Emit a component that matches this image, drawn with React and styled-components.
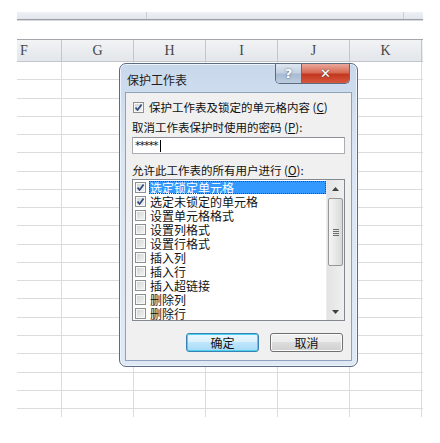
import styled, { createGlobalStyle } from "styled-components";

const cjk = `"Noto Sans CJK SC", "Noto Sans", sans-serif`;

const Global = createGlobalStyle`
  html, body { margin: 0; padding: 0; background: #ffffff; }
  body { width: 440px; height: 443px; overflow: hidden; font-family: ${cjk}; }
`;

const Page = styled.div`
  position: relative;
  width: 440px;
  height: 443px;
  padding: 12px 17px 0;
  box-sizing: border-box;
`;

const Band = styled.div`
  height: 7px;
  display: grid;
  grid-template-columns: 130px 1fr 19px;
  background: linear-gradient(#eef1f5, #e2e6ec);
  border-bottom: 1px solid #9b9fa5;
  box-shadow: 0 1px 0 #d6d9dd;
`;

const BandCell = styled.div`
  border-right: 1px solid #c9ced6;
  &:last-child { border-right: none; }
`;

const FormulaArea = styled.div`
  height: 18px;
  margin-top: 1px;
`;

const Sheet = styled.div`
  height: 377px;
  overflow: hidden;
  border-top: 1px solid #a3a6ab;
`;

const Row = styled.div`
  display: grid;
  grid-template-columns: 45px repeat(5, 72px) 20px;
  height: ${(p) => (p.$head ? "22px" : "18.28px")};
  box-sizing: border-box;
  border-bottom: 1px solid ${(p) => (p.$head ? "#c2c6cc" : "#dadcdf")};
  background: ${(p) => (p.$head ? "linear-gradient(#f1f3f5, #e3e6ea)" : "#ffffff")};
`;

const Cell = styled.div`
  border-right: 1px solid ${(p) => (p.$head ? "#c3c7cd" : "#dadcdf")};
  font-family: "Liberation Serif", "DejaVu Serif", serif;
  font-size: 14px;
  line-height: 22px;
  color: #454545;
  text-align: ${(p) => (p.$cut ? "left" : "center")};
  padding-left: ${(p) => (p.$cut ? "3px" : "0")};
`;

const Dialog = styled.div`
  position: absolute;
  left: 119px;
  top: 63px;
  width: 239px;
  height: 304px;
  box-sizing: border-box;
  border: 1px solid #5b6c82;
  border-radius: 7px;
  background: linear-gradient(#c8d8eb, #d9e5f3 30%, #dfe9f5);
  box-shadow: inset 0 0 0 1px #eef4fb;
  display: flex;
  flex-direction: column;
`;

const TitleBar = styled.div`
  height: 28px;
  display: flex;
  align-items: flex-start;
  justify-content: space-between;
  padding-left: 7px;
  padding-right: 7px;
`;

const Title = styled.div`
  font-size: 12px;
  line-height: 12px;
  margin-top: 10px;
  color: #1e1e1e;
`;

const Controls = styled.div`
  display: flex;
  height: 19px;
  border: 1px solid #5d6b80;
  border-top: none;
  border-radius: 0 0 5px 5px;
  overflow: hidden;
`;

const CtrlBtn = styled.div`
  width: ${(p) => (p.$close ? "47px" : "25px")};
  display: flex;
  align-items: center;
  justify-content: center;
  background: ${(p) =>
    p.$close
      ? "linear-gradient(#e9a99c, #d96a55 45%, #c2371f 55%, #d7593d)"
      : "linear-gradient(#dfe7f1, #c3d1e2 45%, #a9bbd2 55%, #bccde0)"};
  border-right: ${(p) => (p.$close ? "none" : "1px solid #5d6b80")};
  color: #ffffff;
  font-family: "DejaVu Sans", sans-serif;
  font-weight: bold;
  font-size: 13px;
  line-height: 13px;
  text-shadow: 0 0 2px #404a58;
`;

const Panel = styled.div`
  flex: 1;
  margin: 0 5px 5px;
  background: #f0f0f0;
  border: 1px solid #8fa2bb;
  padding: 0 6px 0 6px;
  display: flex;
  flex-direction: column;
  font-size: 11.5px;
  line-height: 14px;
  color: #111;
`;

const CheckRow = styled.div`
  display: flex;
  align-items: center;
  gap: 5px;
  height: 14px;
  margin-top: 7px;
  padding-left: 1px;
  white-space: nowrap;
`;

const Label = styled.div`
  height: 14px;
  line-height: 14px;
  margin-top: ${(p) => p.$mt}px;
  white-space: nowrap;
`;

const Box = styled.div`
  width: 9px;
  height: 9px;
  flex: none;
  border: 1px solid #8e8f8f;
  background: linear-gradient(135deg, #d3d3d3, #f4f4f4);
  box-shadow: inset 0 0 0 1px #f8f8f8;
  display: flex;
  align-items: center;
  justify-content: center;
`;

const Input = styled.div`
  margin-top: 3px;
  height: 17px;
  box-sizing: border-box;
  border: 1px solid #abadb3;
  border-top-color: #8e9096;
  background: #fff;
  display: flex;
  align-items: center;
  padding-left: 2px;
  font-family: "DejaVu Sans", sans-serif;
  font-size: 11px;
  line-height: 12px;
  letter-spacing: -1px;
`;

const Caret = styled.span`
  width: 1px;
  height: 12px;
  margin-left: 2px;
  background: #000;
`;

const List = styled.div`
  margin-top: 2px;
  height: 142px;
  box-sizing: border-box;
  border: 1px solid #828790;
  background: #fff;
  display: flex;
`;

const Items = styled.div`
  flex: 1;
  display: flex;
  flex-direction: column;
`;

const Item = styled.div`
  height: 14px;
  display: flex;
  align-items: center;
  padding-left: 2px;
  gap: 3px;
  font-size: 12px;
  line-height: 13px;
  white-space: nowrap;
`;

const ItemText = styled.div`
  flex: 1;
  height: 13px;
  line-height: 13px;
  padding-left: 1px;
  background: ${(p) => (p.$sel ? "#3399ff" : "transparent")};
  color: ${(p) => (p.$sel ? "#ffffff" : "#111")};
  outline: ${(p) => (p.$sel ? "1px dotted #1b4f8f" : "none")};
  outline-offset: -1px;
`;

const Scroll = styled.div`
  width: 17px;
  display: flex;
  flex-direction: column;
  background: linear-gradient(90deg, #e3e3e3, #f0f0f0);
  border-left: 1px solid #ececec;
`;

const Arrow = styled.div`
  height: 17px;
  display: flex;
  align-items: center;
  justify-content: center;
`;

const Track = styled.div`
  flex: 1;
  display: flex;
  flex-direction: column;
`;

const Thumb = styled.div`
  margin: 1px 1px 0;
  height: 68px;
  box-sizing: border-box;
  border: 1px solid #979797;
  border-radius: 2px;
  background: linear-gradient(90deg, #f4f4f4, #e8e8e8 50%, #d8d8d8);
  display: flex;
  flex-direction: column;
  align-items: center;
  justify-content: center;
  gap: 1px;
`;

const Grip = styled.div`
  width: 6px;
  height: 1px;
  background: #6c6c6c;
`;

const Buttons = styled.div`
  margin-top: 12px;
  display: flex;
  justify-content: flex-end;
  gap: 11px;
  padding-right: 2px;
`;

const Button = styled.div`
  width: 73px;
  height: 19px;
  box-sizing: border-box;
  border: 1px solid ${(p) => (p.$def ? "#3c7fb1" : "#707070")};
  border-radius: 3px;
  background: ${(p) =>
    p.$def
      ? "linear-gradient(#eaf6fd, #d9f0fc 50%, #bee6fd 50%, #a7d9f5)"
      : "linear-gradient(#f2f2f2, #ebebeb 50%, #dddddd 50%, #cfcfcf)"};
  box-shadow: inset 0 0 0 1px ${(p) => (p.$def ? "#48d3f5" : "#fbfbfb")};
  display: flex;
  align-items: center;
  justify-content: center;
  font-size: 12px;
  line-height: 14px;
  color: #111;
`;

const Check = () => (
  <svg width="9" height="9" viewBox="0 0 9 9">
    <path d="M1.5 4.6 L3.6 7 L7.6 1.4" fill="none" stroke="#2b4a7e" strokeWidth="1.7" />
  </svg>
);

const CheckBox = ({ on }) => <Box>{on && <Check />}</Box>;

const cols = ["F", "G", "H", "I", "J", "K", ""];
const items = [
  ["选定锁定单元格", true],
  ["选定未锁定的单元格", true],
  ["设置单元格格式", false],
  ["设置列格式", false],
  ["设置行格式", false],
  ["插入列", false],
  ["插入行", false],
  ["插入超链接", false],
  ["删除列", false],
  ["删除行", false],
];

export default function App() {
  return (
    <Page>
      <Global />
      <Band>
        <BandCell />
        <BandCell />
        <BandCell />
      </Band>
      <FormulaArea />
      <Sheet>
        <Row $head>
          {cols.map((c, i) => (
            <Cell key={i} $head $cut={i === 0}>{c}</Cell>
          ))}
        </Row>
        {Array.from({ length: 20 }).map((_, r) => (
          <Row key={r}>
            {cols.map((c, i) => (
              <Cell key={i} />
            ))}
          </Row>
        ))}
      </Sheet>

      <Dialog>
        <TitleBar>
          <Title>保护工作表</Title>
          <Controls>
            <CtrlBtn>?</CtrlBtn>
            <CtrlBtn $close>✕</CtrlBtn>
          </Controls>
        </TitleBar>
        <Panel>
          <CheckRow>
            <CheckBox on />
            <span>保护工作表及锁定的单元格内容 (<u>C</u>)</span>
          </CheckRow>
          <Label $mt={6}>取消工作表保护时使用的密码 (<u>P</u>):</Label>
          <Input>
            *****<Caret />
          </Input>
          <Label $mt={9}>允许此工作表的所有用户进行 (<u>O</u>):</Label>
          <List>
            <Items>
              {items.map(([t, on], i) => (
                <Item key={t}>
                  <CheckBox on={on} />
                  <ItemText $sel={i === 0}>{t}</ItemText>
                </Item>
              ))}
            </Items>
            <Scroll>
              <Arrow>
                <svg width="7" height="4" viewBox="0 0 7 4">
                  <path d="M0 4 L3.5 0 L7 4 Z" fill="#404040" />
                </svg>
              </Arrow>
              <Track>
                <Thumb>
                  <Grip />
                  <Grip />
                  <Grip />
                  <Grip />
                </Thumb>
              </Track>
              <Arrow>
                <svg width="7" height="4" viewBox="0 0 7 4">
                  <path d="M0 0 L3.5 4 L7 0 Z" fill="#404040" />
                </svg>
              </Arrow>
            </Scroll>
          </List>
          <Buttons>
            <Button $def>确定</Button>
            <Button>取消</Button>
          </Buttons>
        </Panel>
      </Dialog>
    </Page>
  );
}
